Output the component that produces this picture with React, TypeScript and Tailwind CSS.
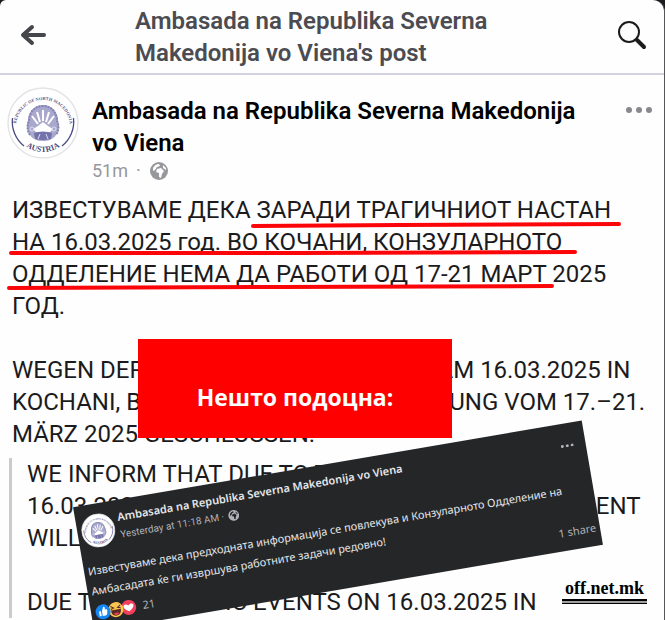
import React from 'react';

const Emblem: React.FC<{ id: string; className?: string }> = ({ id, className }) => (
    <svg viewBox="0 0 72 72" className={className} role="img" aria-label="Republic of North Macedonia, Austria">
        <defs>
            <path id={`${id}-top`} d="M9 40 A27 27 0 1 1 63 40" />
            <path id={`${id}-bottom`} d="M7 36 A29 29 0 0 0 65 36" />
        </defs>
        <circle cx="36" cy="36" r="35" fill="#fff" stroke="#e4e4e8" strokeWidth="1.5" />
        <path d="M5.500 31 A31 31 0 0 0 17 59" fill="none" stroke="#4b4a80" strokeWidth="1.300" />
        <path d="M66.500 31 A31 31 0 0 1 55 59" fill="none" stroke="#4b4a80" strokeWidth="1.300" />
        <text fontSize="4.5" fontWeight="bold" fill="#5a588f" fontFamily="Liberation Serif, serif" textAnchor="middle">
            <textPath href={`#${id}-top`} startOffset="50%">REPUBLIC OF NORTH MACEDONIA</textPath>
        </text>
        <text fontSize="8" fontWeight="bold" fill="#4b4a80" fontFamily="Liberation Serif, serif" textAnchor="middle">
            <textPath href={`#${id}-bottom`} startOffset="50%">AUSTRIA</textPath>
        </text>
        {/* Coat of arms */}
        <path d="M36 18 C46 18 51 26 51 34 C53 38 52 44 49 48 C46 53 40 54 36 54 C32 54 26 53 23 48 C20 44 19 38 21 34 C21 26 26 18 36 18Z" fill="#a9a8cd" />
        <path d="M23 48 C20 44 20 38 22 34 C22 26 27 19 36 19 C45 19 50 26 50 34 C52 38 52 44 49 48" fill="none" stroke="#8482b4" strokeWidth="2" strokeDasharray="2 1" />
        <g stroke="#fff" strokeWidth="2">
            <path d="M36 34V23" />
            <path d="M33 35L30 25" />
            <path d="M39 35L42 25" />
            <path d="M31 37L25 29" />
            <path d="M41 37L47 29" />
        </g>
        <path d="M26 42 L31 39 L36 35 L41 39 L46 42 L43 45 H29 Z" fill="#fff" />
        <circle cx="25" cy="42" r="2" fill="none" stroke="#dcdcf0" strokeWidth="1" />
        <circle cx="47" cy="42" r="2" fill="none" stroke="#dcdcf0" strokeWidth="1" />
        <path d="M27 46 Q36 43 45 46 L44 52 Q36 54 28 52 Z" fill="#7472aa" />
        <path d="M31 52 L33 47 M41 52 L39 47" stroke="#dcdcf0" strokeWidth="1" />
    </svg>
);

const Globe: React.FC<{ className?: string }> = ({ className }) => (
    <svg viewBox="0 0 20 20" className={className} aria-hidden="true">
        <circle cx="10" cy="10" r="9" fill="currentColor" />
        <path d="M4 7 Q6 3 10 3 L11 5 L8 6 L6 9 L4 10 Z" className="fill-(--land)" />
        <path d="M8 8 L12 7 L15 10 L13 13 L12 17 L10 16 L10 12 L7 11 Z" className="fill-(--land)" />
        <path d="M14 4 L17 7 L17 9 L14 7 Z" className="fill-(--land)" />
    </svg>
);

const Dots: React.FC<{ className?: string }> = ({ className }) => (
    <svg viewBox="0 0 26 6" className={className} fill="currentColor" aria-hidden="true">
        <circle cx="3" cy="3" r="3" />
        <circle cx="13" cy="3" r="3" />
        <circle cx="23" cy="3" r="3" />
    </svg>
);

const Reactions: React.FC = () => (
    <svg viewBox="0 0 42 16" className="h-4 w-[42px]" aria-hidden="true">
        <circle cx="34" cy="8" r="7.500" fill="#f0405c" />
        <path d="M34 12 C25 7 30 2 34 6 C38 2 43 7 34 12Z" fill="#fff" />
        <circle cx="21" cy="8" r="7.500" fill="#fbc54f" />
        <path d="M16 8 H26 Q26 14 21 14 Q16 14 16 8Z" fill="#5a2a20" />
        <path d="M18 12 Q21 10 24 12 Q21 15 18 12Z" fill="#f0405c" />
        <path d="M16 4 L19 6 L16 7 M26 4 L23 6 L26 7" fill="none" stroke="#5a2a20" strokeWidth="1" />
        <circle cx="8" cy="8" r="7.500" fill="#1688f5" />
        <path d="M4 7 H6 V12 H4Z M7 7 L9 3 Q11 3 10 6 H12 Q13 7 12 9 Q12 12 10 12 H7Z" fill="#fff" />
    </svg>
);

const SharedPost: React.FC = () => (
    <article className="absolute top-[463px] left-[80px] h-[126px] w-[516px] -rotate-[9.700deg] bg-[#242628] font-['Noto_Sans',sans-serif] text-[11px] leading-5 text-[#e4e6eb]">
        <header className="flex items-start gap-1 pt-2 pr-3 pl-1">
            <Emblem id="shared" className="mt-[2px] h-[34px] w-[34px]" />
            <div className="flex-1">
                <h2 className="leading-[18px] font-semibold">Ambasada na Republika Severna Makedonija vo Viena</h2>
                <p className="flex items-center gap-1 font-[Roboto,sans-serif] text-[10px] leading-[18px] text-[#b0b3b8]">
                    Yesterday at 11:18 AM · <Globe className="h-3 w-3 [--land:#242628]" />
                </p>
            </div>
            <button type="button" aria-label="More options" className="flex h-7 items-center text-[#b0b3b8]">
                <Dots className="h-[3px] w-[13px]" />
            </button>
        </header>
        <p className="px-1 pt-3 whitespace-nowrap">
            Известуваме дека предходната информација се повлекува и Конзуларното Одделение на
            <br />
            Амбасадата ќе ги извршува работните задачи редовно!
        </p>
        <footer className="flex items-center justify-between px-1 pt-[2px] text-[#b0b3b8]">
            <span className="flex items-center gap-[6px]">
                <Reactions /> 21
            </span>
            <span>1 share</span>
        </footer>
    </article>
);

const App: React.FC = () => {
    return (
        <div className="min-h-screen bg-[#1c1c1e]">
            <main className="relative min-h-screen overflow-hidden rounded-tl-md rounded-tr-xl border-r border-[#55555a] bg-[#fefefe] font-[Roboto,sans-serif] text-[24px] leading-8 text-[#1b1b1d]">
                <header className="flex items-center border-b-2 border-[#d3d1dd] pt-[5px] pr-[17px] pb-1 pl-5">
                    <button type="button" aria-label="Back" className="pb-1 text-[#45464b]">
                        <svg viewBox="0 0 26 22" className="h-[22px] w-[26px]" fill="none" stroke="currentColor" strokeWidth="4" strokeLinecap="round" strokeLinejoin="round">
                            <path d="M12 3L3 11L12 19M4 11H24" />
                        </svg>
                    </button>
                    <h1 className="ml-[89px] flex-1 font-semibold text-[#4b4c52]">
                        Ambasada na Republika Severna
                        <br />
                        Makedonija vo Viena's post
                    </h1>
                    <button type="button" aria-label="Search" className="pb-1 text-[#1b1b1d]">
                        <svg viewBox="0 0 30 30" className="h-[30px] w-[30px]" fill="none" stroke="currentColor" strokeLinecap="round">
                            <circle cx="12" cy="12" r="10" strokeWidth="2" />
                            <path d="M20 20L27 27" strokeWidth="4" />
                        </svg>
                    </button>
                </header>

                <section className="flex items-start pt-5 pr-3 pl-[7px]">
                    <Emblem id="author" className="-mt-2 h-[72px] w-[72px]" />
                    <div className="ml-[13px] flex-1">
                        <h2 className="font-semibold text-black">
                            Ambasada na Republika Severna Makedonija
                            <br />
                            vo Viena
                        </h2>
                        <p className="flex items-center gap-2 text-[18px] leading-6 text-[#97989c]">
                            51m <span>·</span> <Globe className="h-5 w-5 [--land:#fefefe]" />
                        </p>
                    </div>
                    <button type="button" aria-label="More options" className="pt-3 text-[#88898d]">
                        <Dots className="h-[6px] w-[26px]" />
                    </button>
                </section>

                <div className="relative mt-[11px] pl-3 whitespace-nowrap">
                    <p>
                        ИЗВЕСТУВАМЕ ДЕКА ЗАРАДИ ТРАГИЧНИОТ НАСТАН
                        <br />
                        НА 16.03.2025 год. ВО КОЧАНИ, КОНЗУЛАРНОТО
                        <br />
                        ОДДЕЛЕНИЕ НЕМА ДА РАБОТИ ОД 17-21 МАРТ 2025
                        <br />
                        ГОД.
                    </p>
                    {/* Marker strokes */}
                    <svg viewBox="0 0 640 100" className="absolute top-0 left-0 h-[100px] w-[640px]" fill="none" stroke="#fb0509" strokeWidth="4" strokeLinecap="round" aria-hidden="true">
                        <path d="M253 32L400 31L619 30" />
                        <path d="M11 59L300 59L575 58" />
                        <path d="M9 94L280 93L552 92" />
                    </svg>
                </div>

                <p className="mt-8 pl-3 whitespace-nowrap">
                    WEGEN DER TRAGISCHEN EREIGNISSE AM 16.03.2025 IN
                    <br />
                    KOCHANI, BLEIBT DIE KONSULARABTEILUNG VOM 17.–21.
                    <br />
                    MÄRZ 2025 GESCHLOSSEN.
                </p>

                <blockquote className="mt-2 ml-[9px] border-l-3 border-[#cbcbce] pl-[15px] whitespace-nowrap">
                    <p>
                        WE INFORM THAT DUE TO TRAGIC EVENTS ON
                        <br />
                        16.03.2025 IN KOCHANI, THE CONSULATE DEPARTMENT
                        <br />
                        WILL NOT WORK
                    </p>
                    <p className="mt-8">DUE TO THE TRAGIC EVENTS ON 16.03.2025 IN</p>
                </blockquote>

                <div className="absolute top-[339px] left-[138px] flex h-[99px] w-[314px] items-center justify-center bg-[#ff0000] pt-4 font-['Open_Sans',sans-serif] text-[23px] font-bold text-white">
                    Нешто подоцна:
                </div>

                <SharedPost />

                <a href="#" className="absolute top-[577px] left-[562px] w-[85px] text-center font-['Liberation_Serif',serif] text-[18px] leading-[22px] font-bold text-black">
                    off.net.mk
                    <span className="block h-[5px] border-t-2 border-b border-black bg-[#a0a0a0]" />
                </a>
            </main>
        </div>
    );
};

export default App;
